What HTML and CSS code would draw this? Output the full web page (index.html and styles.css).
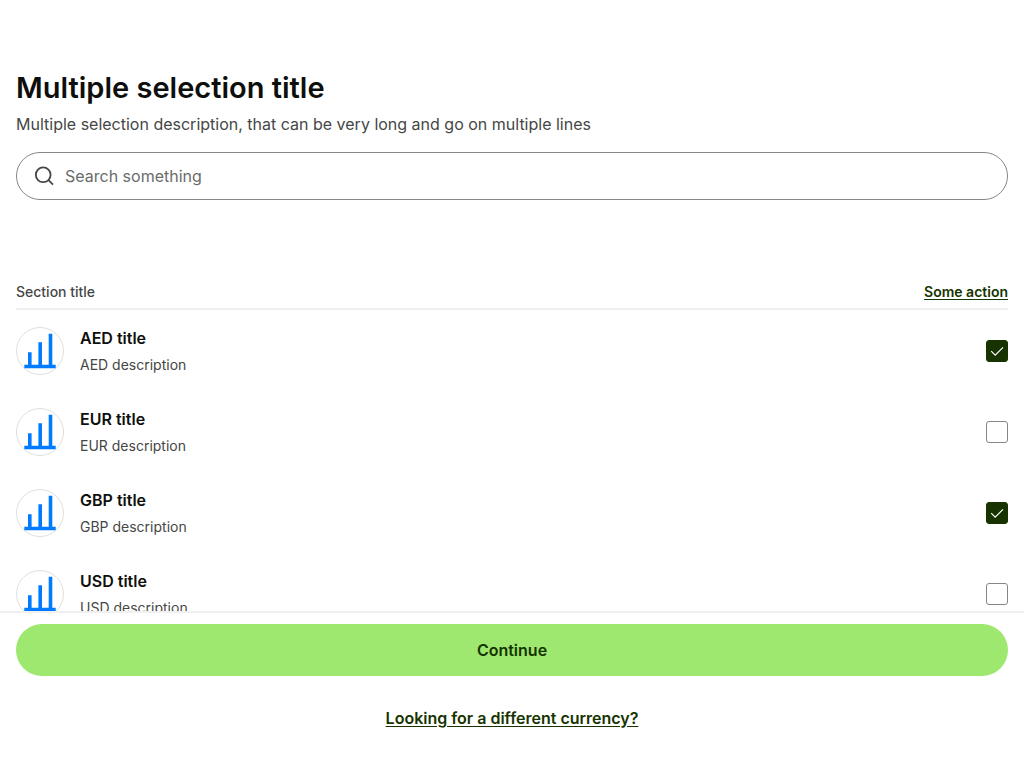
FILE: index.html
```html
<!DOCTYPE html>
<html lang="en">
<head>
<meta charset="utf-8">
<meta name="viewport" content="width=device-width, initial-scale=1">
<title>Multiple selection title</title>
<link rel="stylesheet" href="styles.css">
</head>
<body>
<svg class="sprite" aria-hidden="true">
  <symbol id="chart" viewBox="0 0 32 36">
    <path fill="#007aff" d="M.3 31.8H4V19.3h3.6v12.5h6.8V9.2H18v22.6h6.7V.8h3.6v31h3.4v3.5H.3z"/>
  </symbol>
</svg>
<main class="content">
  <header class="intro">
    <h1 class="title">Multiple selection title</h1>
    <p class="description">Multiple selection description, that can be very long and go on multiple lines</p>
    <label class="search">
      <svg class="search-icon" viewBox="0 0 24 24" aria-hidden="true"><circle cx="10.2" cy="10.8" r="7.4"/><path d="M15.5 16.1 20 20.6"/></svg>
      <input class="search-input" type="search" placeholder="Search something" aria-label="Search something">
    </label>
  </header>
  <section>
    <div class="section-header">
      <h2 class="section-title">Section title</h2>
      <a class="section-action" href="#">Some action</a>
    </div>
    <label class="option">
      <span class="avatar"><svg class="avatar-icon" aria-hidden="true"><use href="#chart"/></svg></span>
      <span class="option-text"><span class="option-title">AED title</span><span class="option-description">AED description</span></span>
      <span class="check"><input class="checkbox" type="checkbox" checked><svg class="tick" viewBox="0 0 22 22" aria-hidden="true"><path d="m5.2 11.2 4 4L17 7.4"/></svg></span>
    </label>
    <label class="option">
      <span class="avatar"><svg class="avatar-icon" aria-hidden="true"><use href="#chart"/></svg></span>
      <span class="option-text"><span class="option-title">EUR title</span><span class="option-description">EUR description</span></span>
      <span class="check"><input class="checkbox" type="checkbox"><svg class="tick" viewBox="0 0 22 22" aria-hidden="true"><path d="m5.2 11.2 4 4L17 7.4"/></svg></span>
    </label>
    <label class="option">
      <span class="avatar"><svg class="avatar-icon" aria-hidden="true"><use href="#chart"/></svg></span>
      <span class="option-text"><span class="option-title">GBP title</span><span class="option-description">GBP description</span></span>
      <span class="check"><input class="checkbox" type="checkbox" checked><svg class="tick" viewBox="0 0 22 22" aria-hidden="true"><path d="m5.2 11.2 4 4L17 7.4"/></svg></span>
    </label>
    <label class="option">
      <span class="avatar"><svg class="avatar-icon" aria-hidden="true"><use href="#chart"/></svg></span>
      <span class="option-text"><span class="option-title">USD title</span><span class="option-description">USD description</span></span>
      <span class="check"><input class="checkbox" type="checkbox"><svg class="tick" viewBox="0 0 22 22" aria-hidden="true"><path d="m5.2 11.2 4 4L17 7.4"/></svg></span>
    </label>
  </section>
</main>
<footer class="footer">
  <button class="continue" type="button">Continue</button>
  <a class="footer-link" href="#">Looking for a different currency?</a>
</footer>
</body>
</html>
```

FILE: styles.css
```css
* { box-sizing: border-box; }

body {
  margin: 0;
  height: 100vh;
  display: flex;
  flex-direction: column;
  background: #fff;
  color: #0e0f0c;
  font-family: Inter, "Liberation Sans", sans-serif;
  font-size: 16px;
  line-height: 24px;
}

.sprite { display: none; }

.content {
  flex: 1;
  min-height: 0;
  overflow-y: auto;
  scrollbar-width: none;
  padding: 70px 16px 0;
}

.intro { margin-bottom: 76px; }

.title {
  margin: 0;
  font-size: 29px;
  line-height: 36px;
  font-weight: 600;
}

.description {
  margin: 6px 0 16px;
  color: #454745;
}

.search {
  display: flex;
  align-items: center;
  gap: 8px;
  height: 48px;
  padding: 0 16px;
  border: 1px solid #868685;
  border-radius: 24px;
}

.search-icon {
  width: 24px;
  height: 24px;
  fill: none;
  stroke: #454745;
  stroke-width: 1.8;
}

.search-input {
  flex: 1;
  min-width: 0;
  padding: 0;
  border: 0;
  outline: 0;
  background: none;
  color: #0e0f0c;
  font: inherit;
}

.search-input::placeholder { color: #6a6c6a; opacity: 1; }

.section-header {
  display: flex;
  justify-content: space-between;
  align-items: center;
  padding: 4px 0;
  border-bottom: 2px solid #f0f0f0;
  font-size: 14px;
}

.section-title {
  margin: 0;
  color: #454745;
  font-size: 14px;
  font-weight: 500;
}

.section-action,
.footer-link {
  color: #163300;
  font-weight: 600;
  text-decoration: underline;
  text-underline-offset: 2px;
}

.option {
  display: flex;
  align-items: center;
  gap: 16px;
  height: 81px;
}

.avatar {
  display: flex;
  align-items: center;
  justify-content: center;
  width: 48px;
  height: 48px;
  border: 1px solid #dfe0df;
  border-radius: 50%;
}

.avatar-icon { width: 32px; height: 36px; }

.option-text {
  flex: 1;
  display: flex;
  flex-direction: column;
  gap: 4px;
}

.option-title { font-weight: 600; }

.option-description {
  color: #454745;
  font-size: 14px;
  line-height: 22px;
}

.check { display: grid; }

.check > * { grid-area: 1 / 1; }

.checkbox {
  appearance: none;
  width: 22px;
  height: 22px;
  margin: 0;
  border: 1px solid #868685;
  border-radius: 3px;
  background: #fff;
}

.checkbox:checked {
  border-color: #163300;
  background: #163300;
}

.tick {
  width: 22px;
  height: 22px;
  visibility: hidden;
  pointer-events: none;
  fill: none;
  stroke: #fff;
  stroke-width: 1.2;
}

.checkbox:checked + .tick { visibility: visible; }

.footer {
  display: flex;
  flex-direction: column;
  align-items: center;
  gap: 30px;
  padding: 11px 16px 38px;
  border-top: 2px solid #f0f0f0;
}

.continue {
  width: 100%;
  height: 52px;
  border: 0;
  border-radius: 26px;
  background: #9fe870;
  color: #163300;
  font: inherit;
  font-weight: 600;
}
```
